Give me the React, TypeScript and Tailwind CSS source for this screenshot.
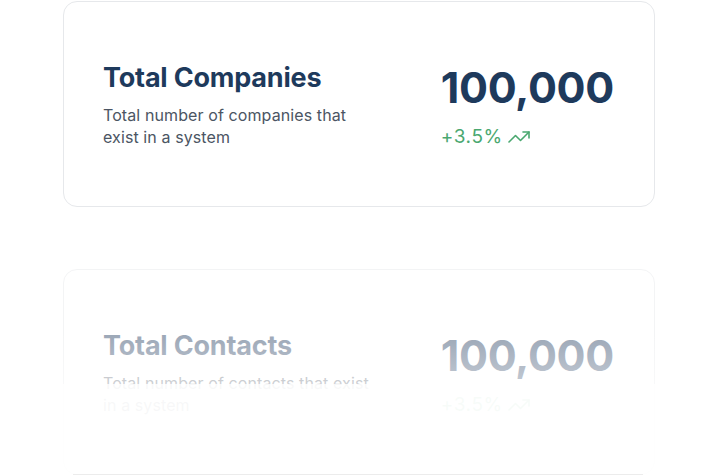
import type { ReactNode } from "react";
import { TrendingUp } from "lucide-react";

type Stat = {
    title: string
    description: string
    value: string
    change: string
}

const stats: Stat[] = [
    {
        title: "Total Companies",
        description: "Total number of companies that exist in a system",
        value: "100,000",
        change: "+3.5%",
    },
    {
        title: "Total Contacts",
        description: "Total number of contacts that exist in a system",
        value: "100,000",
        change: "+3.5%",
    },
]

export default function App(): ReactNode {
    return (
        <div className="relative h-[475px] w-full overflow-hidden bg-white font-['Inter',sans-serif]">
            <div className="flex flex-col gap-[62px] pl-[63px] pt-px">
                <StatCard stat={stats[0]} />
                <div className="opacity-45">
                    <StatCard stat={stats[1]} />
                </div>
            </div>

            {/* fade-out over the lower card */}
            <div className="absolute inset-x-0 top-[330px] h-[54px] bg-gradient-to-b from-white/0 to-white/40" />
            <div className="absolute inset-x-0 top-[384px] bottom-0 flex flex-col justify-end bg-white/90">
                <div className="mx-[73px] h-px bg-[#ececec]" />
            </div>
        </div>
    )
}

function StatCard({ stat }: { stat: Stat }): ReactNode {
    return (
        <div className="flex h-[206px] w-[592px] items-center justify-between rounded-[14px] border border-[#e6e8eb] bg-white pl-[39px] pr-[40px]">
            <div className="mt-[2px] w-[272px]">
                <div className="text-[27px] font-bold leading-[32px] tracking-[-0.2px] text-[#1e3a5c]">{stat.title}</div>
                <div className="mt-[10px] text-[16px] leading-[22px] tracking-[0.1px] text-[#4b5563]">{stat.description}</div>
            </div>
            <div className="mt-[2px] flex flex-col">
                <div className="text-[43px] font-bold leading-[50px] tracking-[-0.3px] text-[#1e3a5c]">{stat.value}</div>
                <div className="mt-[13px] flex items-center gap-[4px] text-[19px] leading-[24px] tracking-[0.6px] text-[#4aa870]">
                    <span>{stat.change}</span>
                    <TrendingUp size={24} strokeWidth={1.6} />
                </div>
            </div>
        </div>
    )
}
